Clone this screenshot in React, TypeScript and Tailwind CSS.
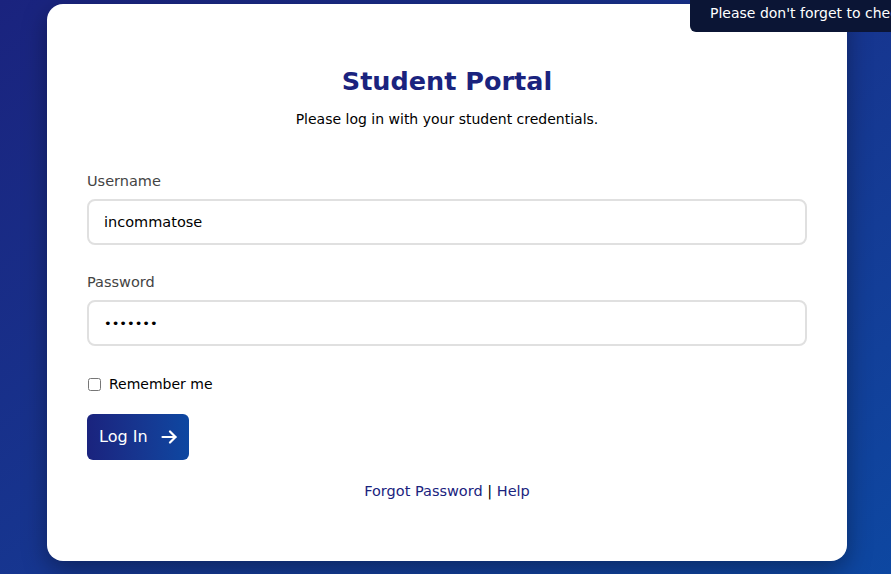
export default function App() {
  return (
    <div
      className="relative w-[891px] h-[574px] overflow-hidden bg-gradient-to-br from-[#1a237e] to-[#0d47a1]"
      style={{ fontFamily: 'Tahoma, "DejaVu Sans", sans-serif' }}
    >
      {/* toast peeking in at the top right */}
      <div className="absolute top-0 left-[690px] h-[32px] pl-[20px] pr-6 pt-[4px] rounded-bl-md bg-[#0b1535] text-white text-[14px] leading-[18px] whitespace-nowrap">
        Please don't forget to check your schedule
      </div>

      <div className="ml-[47px] mt-[4px] w-[800px] h-[557px] bg-white rounded-2xl shadow-[0_8px_24px_rgba(0,0,0,0.35)] px-[40px] pt-[61px] flex flex-col">
        <h1 className="text-center text-[25.5px] leading-[32px] font-bold text-[#1a237e]">Student Portal</h1>
        <p className="mt-[12px] text-center text-[14px] leading-[20px] text-black">
          Please log in with your student credentials.
        </p>

        <label className="mt-[42px] text-[14.5px] leading-[20px] text-[#444]">Username</label>
        <input
          readOnly
          defaultValue="incommatose"
          className="mt-[8px] h-[46px] w-full rounded-lg border-2 border-[#e0e0e0] px-[15px] text-[14.5px] text-black outline-none"
        />

        <label className="mt-[27px] text-[14.5px] leading-[20px] text-[#444]">Password</label>
        <input
          readOnly
          type="password"
          defaultValue="abcdefg"
          className="mt-[8px] h-[46px] w-full rounded-lg border-2 border-[#e0e0e0] px-[15px] text-[13px] text-black outline-none"
        />

        <div className="mt-[28px] h-[20px] flex items-center gap-[8px]">
          <input type="checkbox" className="ml-[1px] w-[13px] h-[13px] m-0" />
          <span className="text-[14px] leading-[20px] text-black">Remember me</span>
        </div>

        <button className="mt-[20px] self-start h-[46px] pl-[12px] pr-[12px] flex items-center gap-[13px] rounded-md bg-gradient-to-r from-[#1a237e] to-[#0d47a1] text-white text-[16px]">
          Log In
          <svg width="16" height="14" viewBox="0 0 16 14" fill="none" stroke="currentColor" strokeWidth="2.2" strokeLinecap="round" strokeLinejoin="round">
            <path d="M1.5 7h13" />
            <path d="M9 1.5 14.5 7 9 12.5" />
          </svg>
        </button>

        <div className="mt-[21px] text-center text-[14.5px] leading-[20px] text-black">
          <a className="text-[#1a237e]">Forgot Password</a> | <a className="text-[#1a237e]">Help</a>
        </div>
      </div>
    </div>
  );
}
